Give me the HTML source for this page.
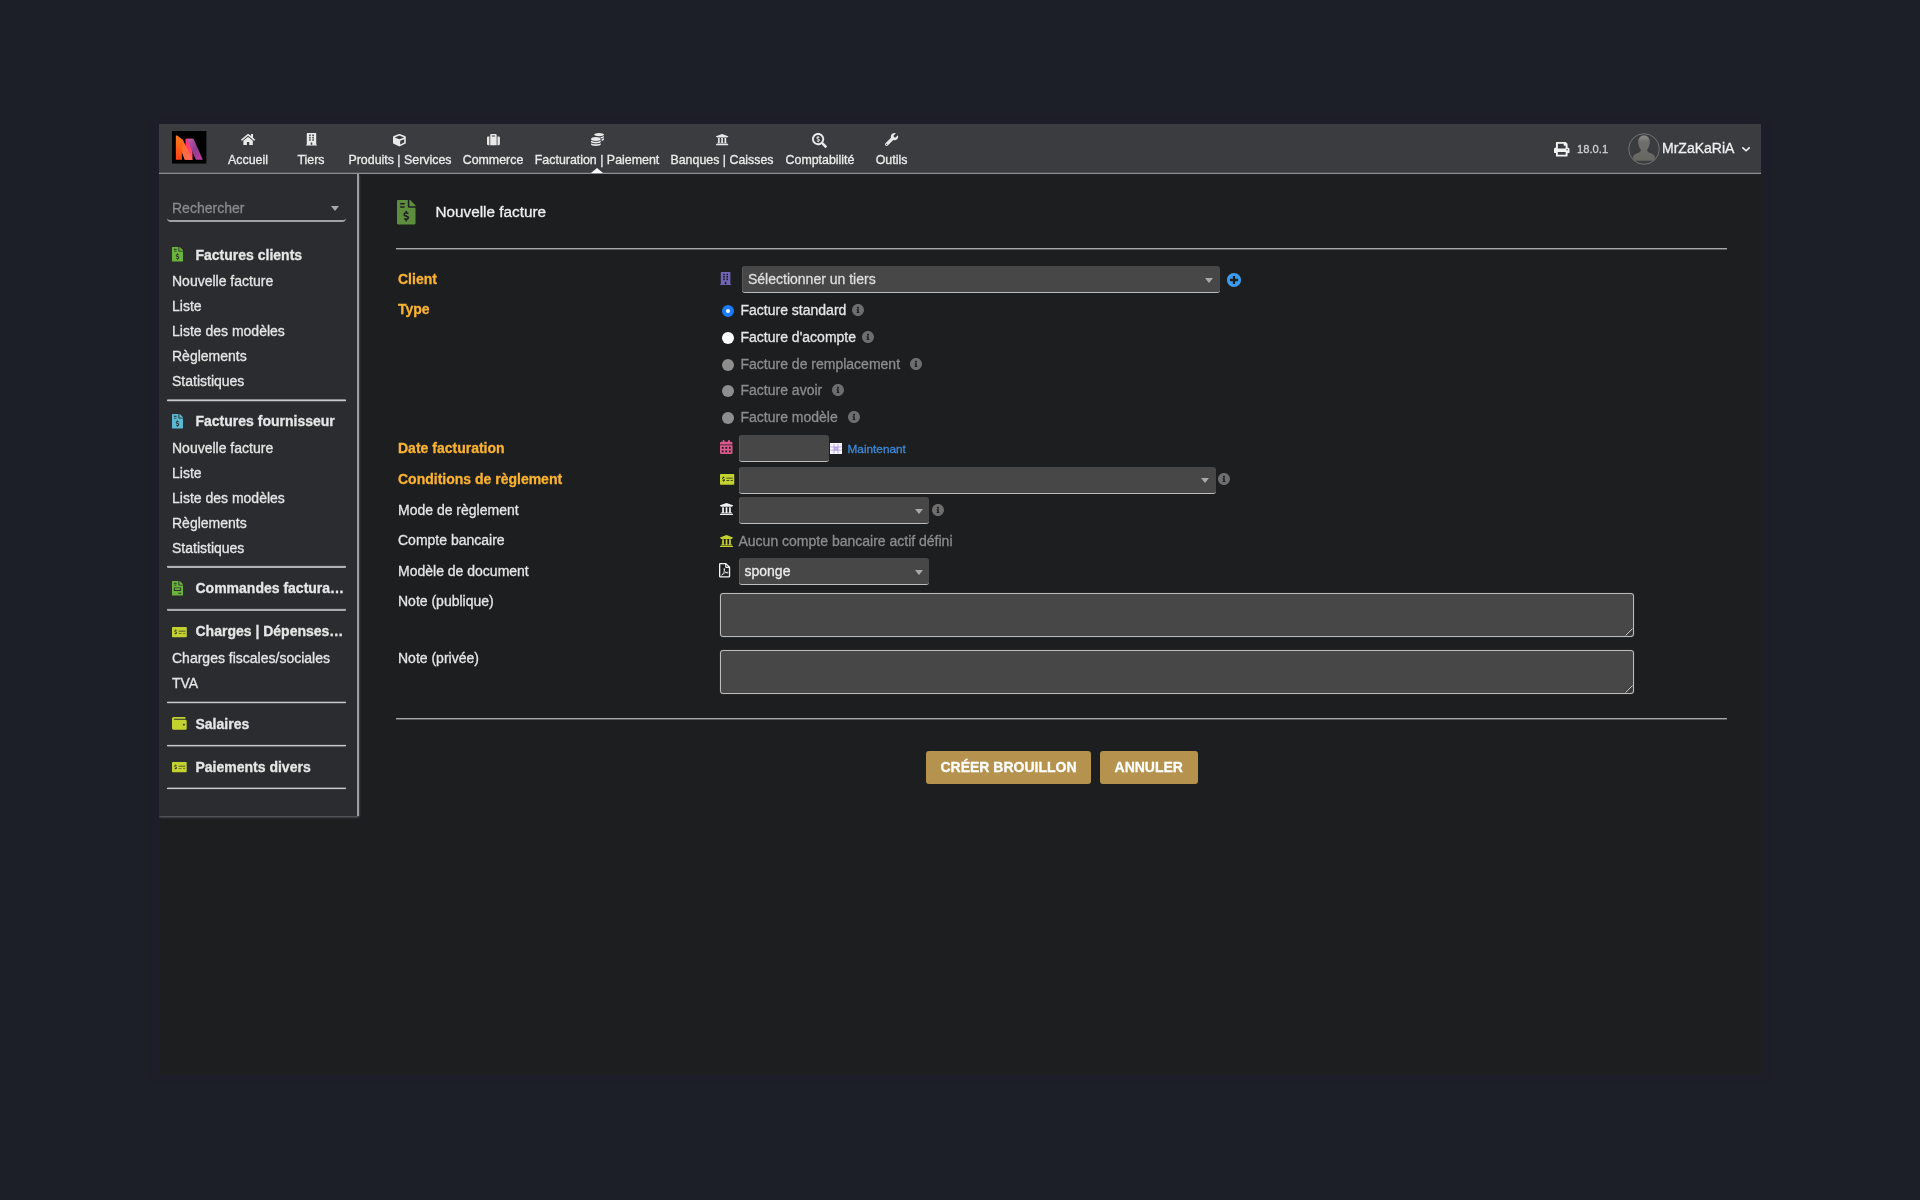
<!DOCTYPE html>
<html lang="fr">
<head>
<meta charset="utf-8">
<title>Nouvelle facture</title>
<style>
*{box-sizing:border-box;margin:0;padding:0}
html,body{width:1920px;height:1200px;overflow:hidden}
body{background:#1d1f28;font-family:"Liberation Sans",sans-serif;font-size:14px;color:#e6e6e6;position:relative}
.abs,.t,.ic,.sep,.fld,.ta,.radio,.info,.btn{position:absolute}
#win{left:159px;top:124px;width:1602px;height:951px;background:#1d1e20;box-shadow:0 0 5px 3px rgba(31,29,46,.6)}
#topbar{left:159px;top:124px;width:1602px;height:50px;background:#3b3c40;border-bottom:1px solid #8d8e91;box-shadow:inset 0 -1px 0 #505155}
#side{left:159px;top:174px;width:200px;height:642px;background:#2b2c30;border-right:2px solid #9e9ea1;box-shadow:0 1px 2.5px rgba(190,190,195,.5);clip-path:inset(0 -5px -10px 0)}
.t{white-space:nowrap;line-height:16px;font-size:14px;color:#e6e6e6;-webkit-text-stroke:0.3px currentColor}
.nav{font-size:12.4px;text-align:center;width:160px;margin-left:-80px;color:#ececec}
.b{font-weight:bold}
.req{font-weight:bold;color:#f9b233}
.dim{color:#8d8d8d}
.sep{left:166.5px;width:179.5px;height:3px;border-radius:1px;background:linear-gradient(to bottom,rgba(200,200,205,var(--a)) 0 1px,rgba(200,200,205,var(--b)) 1px 2px,rgba(200,200,205,var(--c)) 2px 3px)}
.hr{position:absolute;left:396px;width:1331px;height:2px;background:linear-gradient(to bottom,#a8a8ab 0 1px,rgba(168,168,171,.42) 1px 2px)}
.fld{background:#474747;border-bottom:1.5px solid #bdbdbd;border-radius:3px 3px 3px 3px;box-shadow:inset 1px 0 0 rgba(120,120,120,.35)}
.arrow{position:absolute;width:0;height:0;border-left:4px solid transparent;border-right:4px solid transparent;border-top:5px solid #a9a9a9}
.ta{left:720px;width:914px;height:44px;background:#474747;border:1px solid #bcbcbc;border-radius:3px;box-shadow:0 0 1px rgba(200,200,200,.55)}
.radio{width:12px;height:12px;border-radius:50%}
.info{width:12px;height:12px}
.btn{height:33px;background:#b5934f;border-radius:3px;color:#fff;font-weight:bold;font-size:14px;line-height:33px;text-align:center;white-space:nowrap;-webkit-text-stroke:0.3px #fff}
svg{position:absolute;overflow:visible}
</style>
</head>
<body>
<div id="root" style="position:absolute;left:0;top:0;width:1920px;height:1200px;will-change:transform">
<div id="win" class="abs"></div>
<div id="topbar" class="abs"></div>
<div id="side" class="abs"></div>

<!-- ===== TOP BAR ===== -->

<div class="t nav" style="left:248px;top:152px">Accueil</div>
<div class="t nav" style="left:311px;top:152px">Tiers</div>
<div class="t nav" style="left:400px;top:152px">Produits | Services</div>
<div class="t nav" style="left:493px;top:152px">Commerce</div>
<div class="t nav" style="left:597px;top:152px">Facturation | Paiement</div>
<div class="t nav" style="left:722px;top:152px">Banques | Caisses</div>
<div class="t nav" style="left:820px;top:152px">Comptabilité</div>
<div class="t nav" style="left:891.5px;top:152px">Outils</div>
<div class="abs" style="left:591px;top:168px;width:0;height:0;border-left:6px solid transparent;border-right:6px solid transparent;border-bottom:5px solid #fff"></div>

<div class="t" style="left:1577px;top:141px;font-size:11.2px;color:#d0d0d0">18.0.1</div>
<div class="t" style="left:1662px;top:140px;color:#f0f0f0">MrZaKaRiA</div>

<!-- ===== SIDEBAR ===== -->
<div class="t" style="left:172px;top:200px;color:#8a8a8c">Rechercher</div>
<div class="arrow" style="left:331px;top:206px"></div>
<div class="abs" style="left:167px;top:210px;width:179px;height:12px;border-bottom:2px solid #a0a0a6;border-radius:0 0 4px 4px"></div>

<div class="t b" style="left:195.5px;top:247px">Factures clients</div>
<div class="t" style="left:172px;top:273px">Nouvelle facture</div>
<div class="t" style="left:172px;top:298px">Liste</div>
<div class="t" style="left:172px;top:323px">Liste des modèles</div>
<div class="t" style="left:172px;top:348px">Règlements</div>
<div class="t" style="left:172px;top:373px">Statistiques</div>
<div class="sep" style="top:399px;--a:0.6;--b:1;--c:0.25"></div>

<div class="t b" style="left:195.5px;top:413px">Factures fournisseur</div>
<div class="t" style="left:172px;top:440px">Nouvelle facture</div>
<div class="t" style="left:172px;top:465px">Liste</div>
<div class="t" style="left:172px;top:490px">Liste des modèles</div>
<div class="t" style="left:172px;top:515px">Règlements</div>
<div class="t" style="left:172px;top:540px">Statistiques</div>
<div class="sep" style="top:565px;--a:0.12;--b:0.85;--c:0.85"></div>

<div class="t b" style="left:195.5px;top:580px">Commandes factura…</div>
<div class="sep" style="top:608px;--a:0.12;--b:0.8;--c:0.8"></div>

<div class="t b" style="left:195.5px;top:623px">Charges | Dépenses…</div>
<div class="t" style="left:172px;top:650px">Charges fiscales/sociales</div>
<div class="t" style="left:172px;top:675px">TVA</div>
<div class="sep" style="top:701px;--a:0.3;--b:1;--c:0.2"></div>

<div class="t b" style="left:195.5px;top:716px">Salaires</div>
<div class="sep" style="top:744px;--a:0.12;--b:1;--c:0.4"></div>

<div class="t b" style="left:195.5px;top:759px">Paiements divers</div>
<div class="sep" style="top:787px;--a:0.4;--b:1;--c:0.12"></div>

<!-- ===== MAIN ===== -->
<div class="t" style="left:435.5px;top:203px;font-size:15.3px;line-height:18px;color:#f0f0f0">Nouvelle facture</div>
<div class="hr" style="top:248px"></div>

<div class="t req" style="left:398px;top:271px">Client</div>
<div class="t req" style="left:398px;top:301px">Type</div>
<div class="t req" style="left:398px;top:440px">Date facturation</div>
<div class="t req" style="left:398px;top:471px">Conditions de règlement</div>
<div class="t" style="left:398px;top:502px">Mode de règlement</div>
<div class="t" style="left:398px;top:532px">Compte bancaire</div>
<div class="t" style="left:398px;top:563px">Modèle de document</div>
<div class="t" style="left:398px;top:593px">Note (publique)</div>
<div class="t" style="left:398px;top:650px">Note (privée)</div>

<!-- client select -->
<div class="fld" style="left:742px;top:266px;width:478px;height:27px"></div>
<div class="t" style="left:748px;top:271px;color:#dedede">Sélectionner un tiers</div>
<div class="arrow" style="left:1205px;top:278px"></div>

<!-- radios -->
<div class="radio" style="left:722px;top:305px;background:#fff;border:4px solid #1a7df7"></div>
<div class="t" style="left:740.5px;top:302px">Facture standard</div>
<div class="radio" style="left:722px;top:332px;background:#fff"></div>
<div class="t" style="left:740.5px;top:329px">Facture d'acompte</div>
<div class="radio" style="left:722px;top:358.5px;background:#8e8e8e"></div>
<div class="t dim" style="left:740.5px;top:355.5px">Facture de remplacement</div>
<div class="radio" style="left:722px;top:385px;background:#8e8e8e"></div>
<div class="t dim" style="left:740.5px;top:382px">Facture avoir</div>
<div class="radio" style="left:722px;top:412px;background:#8e8e8e"></div>
<div class="t dim" style="left:740.5px;top:409px">Facture modèle</div>

<!-- date -->
<div class="fld" style="left:739px;top:435px;width:90px;height:27px"></div>
<div class="t" style="left:847.5px;top:441px;font-size:11.8px;color:#3d8bd8">Maintenant</div>

<!-- conditions -->
<div class="fld" style="left:739px;top:466.5px;width:477px;height:27px"></div>
<div class="arrow" style="left:1201px;top:478px"></div>

<!-- mode -->
<div class="fld" style="left:739px;top:497px;width:190px;height:27px"></div>
<div class="arrow" style="left:915px;top:508.5px"></div>

<!-- compte -->
<div class="t dim" style="left:738.5px;top:533px">Aucun compte bancaire actif défini</div>

<!-- modele -->
<div class="fld" style="left:739px;top:558px;width:190px;height:27px"></div>
<div class="t" style="left:744.5px;top:563px;color:#ececec">sponge</div>
<div class="arrow" style="left:915px;top:569.5px"></div>

<!-- textareas -->
<div class="ta" style="top:593px"></div>
<div class="ta" style="top:650px"></div>

<div class="hr" style="top:718px"></div>

<div class="btn" style="left:926px;top:751px;width:165px">CRÉER BROUILLON</div>
<div class="btn" style="left:1100px;top:751px;width:97.5px">ANNULER</div>

<svg style="left:241.00px;top:134.00px" width="14.20" height="11.10" viewBox="-0.0 32.0 576.0 448.0" preserveAspectRatio="none"><path fill="#e9e9e9" d="M280.37 148.26L96 300.11V464a16 16 0 0 0 16 16l112.06-.29a16 16 0 0 0 15.92-16V368a16 16 0 0 1 16-16h64a16 16 0 0 1 16 16v95.64a16 16 0 0 0 16 16.05L464 480a16 16 0 0 0 16-16V300L295.67 148.26a12.19 12.19 0 0 0-15.3 0zM571.6 251.47L488 182.56V44.05a12 12 0 0 0-12-12h-56a12 12 0 0 0-12 12v72.61L318.47 43a48 48 0 0 0-61 0L4.34 251.47a12 12 0 0 0-1.6 16.9l25.5 31A12 12 0 0 0 45.15 301l235.22-193.74a12.19 12.19 0 0 1 15.3 0L530.9 301a12 12 0 0 0 16.9-1.6l25.5-31a12 12 0 0 0-1.7-16.93z"/></svg>
<svg style="left:305.60px;top:133.30px" width="11.00" height="12.60" viewBox="0.0 0.0 448.0 512.0" preserveAspectRatio="none"><path fill="#e9e9e9" d="M436 480h-20V24c0-13.255-10.745-24-24-24H56C42.745 0 32 10.745 32 24v456H12c-6.627 0-12 5.373-12 12v20h448v-20c0-6.627-5.373-12-12-12zM128 76c0-6.627 5.373-12 12-12h40c6.627 0 12 5.373 12 12v40c0 6.627-5.373 12-12 12h-40c-6.627 0-12-5.373-12-12V76zm0 96c0-6.627 5.373-12 12-12h40c6.627 0 12 5.373 12 12v40c0 6.627-5.373 12-12 12h-40c-6.627 0-12-5.373-12-12v-40zm52 148h-40c-6.627 0-12-5.373-12-12v-40c0-6.627 5.373-12 12-12h40c6.627 0 12 5.373 12 12v40c0 6.627-5.373 12-12 12zm76 160h-64v-84c0-6.627 5.373-12 12-12h40c6.627 0 12 5.373 12 12v84zm64-172c0 6.627-5.373 12-12 12h-40c-6.627 0-12-5.373-12-12v-40c0-6.627 5.373-12 12-12h40c6.627 0 12 5.373 12 12v40zm0-96c0 6.627-5.373 12-12 12h-40c-6.627 0-12-5.373-12-12v-40c0-6.627 5.373-12 12-12h40c6.627 0 12 5.373 12 12v40zm0-96c0 6.627-5.373 12-12 12h-40c-6.627 0-12-5.373-12-12V76c0-6.627 5.373-12 12-12h40c6.627 0 12 5.373 12 12v40z"/></svg>
<svg style="left:393.20px;top:133.50px" width="12.80" height="12.50" viewBox="0.0 3.2 511.9 503.2" preserveAspectRatio="none"><path fill="#e9e9e9" d="M239.1 6.3l-208 78c-18.700 7-31.100 25-31.100 45v225.100c0 18.200 10.300 34.800 26.500 42.900l208 104c13.500 6.800 29.400 6.800 42.900 0l208-104c16.300-8.100 26.500-24.800 26.500-42.900V129.300c0-20-12.400-37.900-31.100-44.900l-208-78C262 2.200 250 2.200 239.100 6.300zM256 68.400l192 72v1.100l-192 78-192-78v-1.100l192-72zm32 356V275.500l160-65v133.900l-160 80z"/></svg>
<svg style="left:486.50px;top:134.00px" width="12.90" height="11.30" viewBox="0.0 32.0 512.0 448.0" preserveAspectRatio="none"><path fill="#e9e9e9" d="M128 480h256V80c0-26.500-21.500-48-48-48H176c-26.500 0-48 21.500-48 48v400zm64-384h128v32H192V96zm320 80v256c0 26.500-21.500 48-48 48h-48V128h48c26.500 0 48 21.500 48 48zM96 480H48c-26.500 0-48-21.500-48-48V176c0-26.500 21.500-48 48-48h48v352z"/></svg>
<svg style="left:590.60px;top:133.00px" width="13.00" height="12.90" viewBox="0.0 0.0 512.0 512.0" preserveAspectRatio="none"><path fill="#e9e9e9" d="M0 405.3V448c0 35.300 86 64 192 64s192-28.700 192-64v-42.700C342.700 434.400 267.200 448 192 448S41.300 434.400 0 405.300zM320 128c106 0 192-28.700 192-64S426 0 320 0 128 28.700 128 64s86 64 192 64zM0 300.400V352c0 35.300 86 64 192 64s192-28.700 192-64v-51.600c-41.300 34-116.900 51.600-192 51.600S41.300 334.400 0 300.400zm416 11c57.300-11.100 96-31.700 96-55.400v-42.700c-23.200 16.400-57.300 27.600-96 34.500v63.600zM192 160C86 160 0 195.800 0 240s86 80 192 80 192-35.800 192-80-86-80-192-80zm219.300 56.300c60-10.800 100.700-32 100.700-56.300v-42.700c-35.500 25.100-96.500 38.600-160.700 41.800 29.500 14.300 51.200 33.500 60 57.200z"/></svg>
<svg style="left:716.20px;top:134.40px" width="12.20" height="11.20" viewBox="16.0 32.0 480.0 448.0" preserveAspectRatio="none"><path fill="#e9e9e9" d="M496 128v16a8 8 0 0 1-8 8h-24v12c0 6.627-5.373 12-12 12H60c-6.627 0-12-5.373-12-12v-12H24a8 8 0 0 1-8-8v-16a8 8 0 0 1 4.941-7.392l232-88a7.996 7.996 0 0 1 6.118 0l232 88A8 8 0 0 1 496 128zm-24 304H40c-13.255 0-24 10.745-24 24v16a8 8 0 0 0 8 8h464a8 8 0 0 0 8-8v-16c0-13.255-10.745-24-24-24zM96 192v192H60c-6.627 0-12 5.373-12 12v20h416v-20c0-6.627-5.373-12-12-12h-36V192h-64v192h-64V192h-64v192h-64V192H96z"/></svg>
<svg style="left:812.00px;top:133.00px" width="15.00" height="15.00" viewBox="0.0 0.0 512.0 512.0" preserveAspectRatio="none"><path fill="#e9e9e9" d="M505.040 442.660l-99.710-99.690c-4.500-4.500-10.600-7-17-7h-16.300c27.600-35.300 44-79.690 44-127.990C416.030 93.090 322.920 0 208.020 0S0 93.090 0 207.980s93.110 207.980 208.020 207.980c48.300 0 92.710-16.400 128.010-44v16.300c0 6.400 2.500 12.500 7 17l99.710 99.690c9.400 9.400 24.600 9.400 33.900 0l28.300-28.300c9.400-9.400 9.400-24.590.100-33.990zm-297.020-90.700c-79.540 0-144-64.340-144-143.980 0-79.530 64.350-143.980 144-143.980 79.540 0 144 64.340 144 143.980 0 79.530-64.350 143.980-144 143.980zm27.110-152.540l-45.010-13.500c-5.160-1.550-8.770-6.780-8.770-12.730 0-7.270 5.300-13.190 11.800-13.190h28.110c4.560 0 8.960 1.290 12.820 3.720 3.240 2.030 7.360 1.910 10.130-.730l11.750-11.210c3.530-3.370 3.330-9.210-.570-12.140-9.100-6.830-20.080-10.770-31.370-11.350V112c0-4.420-3.580-8-8-8h-16c-4.420 0-8 3.580-8 8v16.120c-23.630.630-42.680 20.550-42.680 45.070 0 19.970 12.990 37.810 31.580 43.390l45.010 13.500c5.160 1.550 8.770 6.780 8.770 12.730 0 7.270-5.300 13.190-11.800 13.190h-28.100c-4.560 0-8.960-1.290-12.820-3.720-3.240-2.030-7.360-1.910-10.130.730l-11.750 11.210c-3.530 3.370-3.330 9.210.570 12.140 9.100 6.830 20.080 10.770 31.370 11.350V304c0 4.420 3.580 8 8 8h16c4.420 0 8-3.580 8-8v-16.120c23.630-.630 42.680-20.540 42.680-45.070 0-19.970-12.990-37.810-31.590-43.390z"/></svg>
<svg style="left:885.00px;top:133.20px" width="13.20" height="12.90" viewBox="-0.0 0.0 512.0 512.0" preserveAspectRatio="none"><path fill="#e9e9e9" d="M507.73 109.1c-2.240-9.030-13.540-12.090-20.120-5.510l-74.360 74.360-67.880-11.310-11.310-67.880 74.360-74.360c6.620-6.620 3.430-17.900-5.660-20.160-47.380-11.740-99.550.910-136.580 37.930-39.640 39.640-50.550 97.100-34.050 147.200L18.740 402.760c-24.990 24.990-24.990 65.510 0 90.500 24.990 24.990 65.510 24.990 90.500 0l213.210-213.210c50.120 16.710 107.470 5.680 147.370-34.220 37.070-37.070 49.700-89.320 37.910-136.730zM64 472c-13.250 0-24-10.750-24-24 0-13.260 10.750-24 24-24s24 10.740 24 24c0 13.250-10.750 24-24 24z"/></svg>
<svg style="left:1553.80px;top:141.80px" width="15.50" height="14.60" viewBox="0.0 0.0 512.0 512.0" preserveAspectRatio="none"><path fill="#f2f2f2" d="M448 192V77.250c0-8.490-3.370-16.620-9.370-22.630L393.370 9.370c-6-6-14.140-9.370-22.630-9.370H96C78.330 0 64 14.330 64 32v160c-35.350 0-64 28.650-64 64v112c0 8.840 7.160 16 16 16h48v96c0 17.670 14.330 32 32 32h320c17.670 0 32-14.330 32-32v-96h48c8.840 0 16-7.160 16-16V256c0-35.350-28.650-64-64-64zm-64 256H128v-96h256v96zm0-224H128V64h192v48c0 8.840 7.160 16 16 16h48v96zm48 72c-13.250 0-24-10.750-24-24 0-13.260 10.750-24 24-24s24 10.740 24 24c0 13.250-10.750 24-24 24z"/></svg>
<svg style="left:1741.80px;top:147.20px" width="8.10" height="4.70" viewBox="5.7 123.5 436.7 265.0" preserveAspectRatio="none"><path fill="#f2f2f2" d="M207.029 381.476L12.686 187.132c-9.373-9.373-9.373-24.569 0-33.941l22.667-22.667c9.357-9.357 24.522-9.375 33.901-.04L224 284.505l154.745-154.021c9.379-9.335 24.544-9.317 33.901.04l22.667 22.667c9.373 9.373 9.373 24.569 0 33.941L240.971 381.476c-9.373 9.372-24.569 9.372-33.942 0z"/></svg>
<svg style="left:172.00px;top:247.00px" width="11.00" height="14.60" viewBox="0.0 0.0 384.0 512.0" preserveAspectRatio="none"><path fill="#6ab43c" d="M377 105L279.100 7c-4.500-4.500-10.600-7-17-7H256v128h128v-6.100c0-6.300-2.500-12.400-7-16.900zM224 136V0H24C10.700 0 0 10.700 0 24v464c0 13.300 10.700 24 24 24h336c13.300 0 24-10.700 24-24V160H248c-13.200 0-24-10.800-24-24zM64 72c0-4.420 3.580-8 8-8h80c4.420 0 8 3.580 8 8v16c0 4.420-3.580 8-8 8H72c-4.420 0-8-3.580-8-8V72zm0 80v-16c0-4.420 3.580-8 8-8h80c4.420 0 8 3.580 8 8v16c0 4.420-3.580 8-8 8H72c-4.420 0-8-3.580-8-8zm144 263.880V440c0 4.420-3.580 8-8 8h-16c-4.420 0-8-3.580-8-8v-24.290c-11.290-.58-22.270-4.520-31.370-11.350-3.900-2.930-4.100-8.770-.57-12.140l11.750-11.210c2.770-2.640 6.890-2.760 10.130-.73 3.870 2.420 8.260 3.720 12.820 3.720h28.110c6.500 0 11.800-5.920 11.800-13.190 0-5.950-3.610-11.190-8.770-12.730l-45-13.500c-18.590-5.580-31.580-23.420-31.580-43.390 0-24.520 19.050-44.440 42.670-45.070V232c0-4.420 3.580-8 8-8h16c4.420 0 8 3.580 8 8v24.290c11.290.58 22.270 4.510 31.370 11.350 3.900 2.930 4.100 8.770.57 12.140l-11.750 11.210c-2.770 2.640-6.890 2.760-10.130.73-3.870-2.430-8.260-3.720-12.820-3.720h-28.110c-6.500 0-11.800 5.920-11.800 13.190 0 5.950 3.610 11.190 8.770 12.730l45 13.500c18.590 5.580 31.580 23.420 31.580 43.390 0 24.530-19.050 44.440-42.670 45.070z"/></svg>
<svg style="left:172.00px;top:414.00px" width="11.00" height="14.60" viewBox="0.0 0.0 384.0 512.0" preserveAspectRatio="none"><path fill="#5ab8d0" d="M377 105L279.100 7c-4.500-4.500-10.600-7-17-7H256v128h128v-6.100c0-6.300-2.500-12.400-7-16.900zM224 136V0H24C10.700 0 0 10.700 0 24v464c0 13.300 10.700 24 24 24h336c13.300 0 24-10.700 24-24V160H248c-13.200 0-24-10.800-24-24zM64 72c0-4.420 3.580-8 8-8h80c4.420 0 8 3.580 8 8v16c0 4.420-3.580 8-8 8H72c-4.420 0-8-3.580-8-8V72zm0 80v-16c0-4.420 3.580-8 8-8h80c4.420 0 8 3.580 8 8v16c0 4.420-3.580 8-8 8H72c-4.420 0-8-3.580-8-8zm144 263.880V440c0 4.420-3.580 8-8 8h-16c-4.420 0-8-3.580-8-8v-24.290c-11.290-.58-22.270-4.520-31.370-11.350-3.900-2.930-4.100-8.770-.57-12.140l11.750-11.210c2.770-2.640 6.890-2.760 10.130-.73 3.870 2.420 8.260 3.720 12.820 3.720h28.110c6.500 0 11.800-5.920 11.800-13.190 0-5.950-3.610-11.190-8.770-12.730l-45-13.500c-18.590-5.580-31.580-23.420-31.580-43.390 0-24.520 19.050-44.440 42.670-45.070V232c0-4.420 3.580-8 8-8h16c4.420 0 8 3.580 8 8v24.290c11.290.58 22.270 4.510 31.370 11.350 3.900 2.930 4.100 8.770.57 12.140l-11.750 11.210c-2.770 2.640-6.890 2.760-10.130.73-3.870-2.430-8.260-3.720-12.820-3.720h-28.110c-6.500 0-11.800 5.920-11.800 13.190 0 5.950 3.610 11.190 8.770 12.730l45 13.500c18.590 5.580 31.580 23.420 31.580 43.390 0 24.530-19.050 44.440-42.670 45.070z"/></svg>
<svg style="left:172.00px;top:581.00px" width="11.00" height="14.60" viewBox="0.0 0.0 384.0 512.0" preserveAspectRatio="none"><path fill="#6ab43c" d="M288 256H96v64h192v-64zm89-151L279.100 7c-4.500-4.500-10.600-7-17-7H256v128h128v-6.100c0-6.300-2.500-12.400-7-16.900zm-153 31V0H24C10.700 0 0 10.700 0 24v464c0 13.300 10.700 24 24 24h336c13.300 0 24-10.700 24-24V160H248c-13.200 0-24-10.800-24-24zM64 72c0-4.420 3.580-8 8-8h80c4.420 0 8 3.580 8 8v16c0 4.420-3.580 8-8 8H72c-4.420 0-8-3.580-8-8V72zm0 64c0-4.420 3.580-8 8-8h80c4.420 0 8 3.580 8 8v16c0 4.420-3.580 8-8 8H72c-4.420 0-8-3.580-8-8v-16zm256 304c0 4.420-3.580 8-8 8h-80c-4.420 0-8-3.580-8-8v-16c0-4.420 3.580-8 8-8h80c4.420 0 8 3.580 8 8v16zm0-200v96c0 8.840-7.160 16-16 16H80c-8.840 0-16-7.160-16-16v-96c0-8.840 7.160-16 16-16h224c8.840 0 16 7.160 16 16z"/></svg>
<svg style="left:172.00px;top:627.00px" width="14.80" height="10.30" viewBox="0.0 32.0 640.0 448.0" preserveAspectRatio="none"><path fill="#c3d22f" d="M608 32H32C14.330 32 0 46.330 0 64v384c0 17.670 14.330 32 32 32h576c17.670 0 32-14.330 32-32V64c0-17.670-14.330-32-32-32zM176 327.880V344c0 4.420-3.580 8-8 8h-16c-4.420 0-8-3.580-8-8v-16.290c-11.290-.58-22.270-4.520-31.370-11.350-3.900-2.930-4.100-8.770-.57-12.140l11.750-11.210c2.770-2.640 6.890-2.760 10.130-.73 3.870 2.420 8.260 3.720 12.820 3.720h28.110c6.500 0 11.800-5.920 11.800-13.190 0-5.950-3.610-11.190-8.770-12.730l-45-13.500c-18.590-5.580-31.580-23.420-31.580-43.390 0-24.520 19.050-44.440 42.670-45.070V152c0-4.420 3.580-8 8-8h16c4.420 0 8 3.580 8 8v16.290c11.290.58 22.270 4.510 31.370 11.350 3.900 2.930 4.100 8.770.57 12.140l-11.750 11.210c-2.770 2.640-6.890 2.760-10.130.73-3.870-2.430-8.260-3.720-12.820-3.720h-28.110c-6.500 0-11.800 5.920-11.800 13.190 0 5.950 3.610 11.190 8.770 12.730l45 13.500c18.590 5.580 31.580 23.420 31.580 43.390 0 24.530-19.040 44.440-42.670 45.070zM416 312c0 4.420-3.580 8-8 8H296c-4.420 0-8-3.580-8-8v-16c0-4.420 3.580-8 8-8h112c4.420 0 8 3.580 8 8v16zm160 0c0 4.420-3.580 8-8 8h-80c-4.420 0-8-3.580-8-8v-16c0-4.420 3.580-8 8-8h80c4.420 0 8 3.580 8 8v16zm0-96c0 4.420-3.580 8-8 8H296c-4.420 0-8-3.580-8-8v-16c0-4.420 3.580-8 8-8h272c4.420 0 8 3.580 8 8v16z"/></svg>
<svg style="left:172.00px;top:717.00px" width="14.70" height="12.80" viewBox="0.0 32.0 512.0 448.0" preserveAspectRatio="none"><path fill="#c3d22f" d="M461.2 128H80c-8.840 0-16-7.160-16-16s7.160-16 16-16h384c8.840 0 16-7.160 16-16 0-26.510-21.490-48-48-48H64C28.650 32 0 60.650 0 96v320c0 35.350 28.650 64 64 64h397.200c28.020 0 50.800-21.530 50.800-48V176c0-26.470-22.780-48-50.800-48zM416 336c-17.670 0-32-14.330-32-32s14.330-32 32-32 32 14.330 32 32-14.330 32-32 32z"/></svg>
<svg style="left:172.00px;top:762.00px" width="14.70" height="10.30" viewBox="0.0 32.0 640.0 448.0" preserveAspectRatio="none"><path fill="#c3d22f" d="M608 32H32C14.330 32 0 46.330 0 64v384c0 17.670 14.330 32 32 32h576c17.670 0 32-14.330 32-32V64c0-17.670-14.330-32-32-32zM176 327.880V344c0 4.420-3.580 8-8 8h-16c-4.420 0-8-3.580-8-8v-16.290c-11.290-.58-22.270-4.520-31.370-11.350-3.900-2.930-4.100-8.770-.57-12.140l11.750-11.210c2.770-2.640 6.890-2.760 10.130-.73 3.870 2.420 8.260 3.720 12.820 3.720h28.110c6.500 0 11.800-5.920 11.800-13.190 0-5.950-3.610-11.190-8.770-12.730l-45-13.500c-18.590-5.580-31.580-23.420-31.580-43.390 0-24.520 19.050-44.440 42.670-45.070V152c0-4.420 3.580-8 8-8h16c4.420 0 8 3.580 8 8v16.290c11.290.58 22.270 4.510 31.370 11.350 3.900 2.930 4.100 8.770.57 12.140l-11.750 11.210c-2.770 2.640-6.890 2.760-10.130.73-3.870-2.430-8.260-3.720-12.820-3.720h-28.110c-6.500 0-11.800 5.920-11.800 13.190 0 5.950 3.610 11.190 8.770 12.730l45 13.500c18.590 5.580 31.580 23.420 31.580 43.390 0 24.530-19.040 44.440-42.670 45.070zM416 312c0 4.420-3.580 8-8 8H296c-4.420 0-8-3.580-8-8v-16c0-4.420 3.580-8 8-8h112c4.420 0 8 3.580 8 8v16zm160 0c0 4.420-3.580 8-8 8h-80c-4.420 0-8-3.580-8-8v-16c0-4.420 3.580-8 8-8h80c4.420 0 8 3.580 8 8v16zm0-96c0 4.420-3.580 8-8 8H296c-4.420 0-8-3.580-8-8v-16c0-4.420 3.580-8 8-8h272c4.420 0 8 3.580 8 8v16z"/></svg>
<svg style="left:397.00px;top:200.00px" width="18.50" height="24.50" viewBox="0.0 0.0 384.0 512.0" preserveAspectRatio="none"><path fill="#5d8e3d" d="M377 105L279.100 7c-4.500-4.500-10.600-7-17-7H256v128h128v-6.100c0-6.300-2.500-12.400-7-16.900zM224 136V0H24C10.700 0 0 10.700 0 24v464c0 13.300 10.700 24 24 24h336c13.300 0 24-10.700 24-24V160H248c-13.200 0-24-10.800-24-24zM64 72c0-4.420 3.580-8 8-8h80c4.420 0 8 3.580 8 8v16c0 4.420-3.580 8-8 8H72c-4.420 0-8-3.580-8-8V72zm0 80v-16c0-4.420 3.580-8 8-8h80c4.420 0 8 3.580 8 8v16c0 4.420-3.580 8-8 8H72c-4.420 0-8-3.580-8-8zm144 263.880V440c0 4.420-3.580 8-8 8h-16c-4.420 0-8-3.580-8-8v-24.290c-11.290-.58-22.270-4.520-31.370-11.350-3.900-2.930-4.100-8.770-.57-12.140l11.750-11.210c2.770-2.640 6.890-2.760 10.130-.73 3.870 2.420 8.260 3.720 12.820 3.720h28.110c6.500 0 11.800-5.920 11.800-13.190 0-5.950-3.610-11.190-8.770-12.730l-45-13.500c-18.590-5.580-31.580-23.420-31.580-43.390 0-24.520 19.050-44.440 42.670-45.070V232c0-4.420 3.580-8 8-8h16c4.420 0 8 3.580 8 8v24.290c11.290.58 22.270 4.510 31.370 11.350 3.900 2.930 4.100 8.770.57 12.140l-11.750 11.210c-2.770 2.640-6.890 2.760-10.130.73-3.870-2.430-8.260-3.720-12.820-3.720h-28.110c-6.500 0-11.800 5.920-11.800 13.190 0 5.950 3.610 11.190 8.770 12.730l45 13.500c18.590 5.580 31.580 23.420 31.580 43.390 0 24.530-19.050 44.440-42.670 45.070z"/></svg>
<svg style="left:720.00px;top:271.50px" width="11.20" height="13.00" viewBox="0.0 0.0 448.0 512.0" preserveAspectRatio="none"><path fill="#6f66b8" d="M436 480h-20V24c0-13.255-10.745-24-24-24H56C42.745 0 32 10.745 32 24v456H12c-6.627 0-12 5.373-12 12v20h448v-20c0-6.627-5.373-12-12-12zM128 76c0-6.627 5.373-12 12-12h40c6.627 0 12 5.373 12 12v40c0 6.627-5.373 12-12 12h-40c-6.627 0-12-5.373-12-12V76zm0 96c0-6.627 5.373-12 12-12h40c6.627 0 12 5.373 12 12v40c0 6.627-5.373 12-12 12h-40c-6.627 0-12-5.373-12-12v-40zm52 148h-40c-6.627 0-12-5.373-12-12v-40c0-6.627 5.373-12 12-12h40c6.627 0 12 5.373 12 12v40c0 6.627-5.373 12-12 12zm76 160h-64v-84c0-6.627 5.373-12 12-12h40c6.627 0 12 5.373 12 12v84zm64-172c0 6.627-5.373 12-12 12h-40c-6.627 0-12-5.373-12-12v-40c0-6.627 5.373-12 12-12h40c6.627 0 12 5.373 12 12v40zm0-96c0 6.627-5.373 12-12 12h-40c-6.627 0-12-5.373-12-12v-40c0-6.627 5.373-12 12-12h40c6.627 0 12 5.373 12 12v40zm0-96c0 6.627-5.373 12-12 12h-40c-6.627 0-12-5.373-12-12V76c0-6.627 5.373-12 12-12h40c6.627 0 12 5.373 12 12v40z"/></svg>
<svg style="left:719.75px;top:440.00px" width="12.50" height="14.00" viewBox="0.0 0.0 448.0 512.0" preserveAspectRatio="none"><path fill="#d9578a" d="M0 464c0 26.500 21.500 48 48 48h352c26.500 0 48-21.500 48-48V192H0v272zm320-196c0-6.600 5.400-12 12-12h40c6.600 0 12 5.400 12 12v40c0 6.600-5.400 12-12 12h-40c-6.600 0-12-5.400-12-12v-40zm0 128c0-6.600 5.400-12 12-12h40c6.600 0 12 5.400 12 12v40c0 6.600-5.400 12-12 12h-40c-6.600 0-12-5.400-12-12v-40zM192 268c0-6.600 5.400-12 12-12h40c6.600 0 12 5.400 12 12v40c0 6.600-5.400 12-12 12h-40c-6.600 0-12-5.400-12-12v-40zm0 128c0-6.600 5.400-12 12-12h40c6.600 0 12 5.400 12 12v40c0 6.600-5.400 12-12 12h-40c-6.600 0-12-5.400-12-12v-40zM64 268c0-6.600 5.400-12 12-12h40c6.600 0 12 5.400 12 12v40c0 6.600-5.400 12-12 12H76c-6.600 0-12-5.400-12-12v-40zm0 128c0-6.600 5.400-12 12-12h40c6.600 0 12 5.400 12 12v40c0 6.600-5.400 12-12 12H76c-6.600 0-12-5.400-12-12v-40zM400 64h-48V16c0-8.800-7.200-16-16-16h-32c-8.800 0-16 7.200-16 16v48H160V16c0-8.800-7.200-16-16-16h-32c-8.800 0-16 7.200-16 16v48H48C21.500 64 0 85.500 0 112v48h448v-48c0-26.500-21.500-48-48-48z"/></svg>
<svg style="left:719.75px;top:474.30px" width="14.25" height="10.70" viewBox="0.0 32.0 640.0 448.0" preserveAspectRatio="none"><path fill="#c3d22f" d="M608 32H32C14.330 32 0 46.330 0 64v384c0 17.670 14.330 32 32 32h576c17.670 0 32-14.330 32-32V64c0-17.670-14.330-32-32-32zM176 327.880V344c0 4.420-3.580 8-8 8h-16c-4.420 0-8-3.580-8-8v-16.290c-11.290-.58-22.270-4.520-31.370-11.350-3.900-2.930-4.100-8.770-.57-12.140l11.750-11.210c2.770-2.640 6.890-2.760 10.130-.73 3.870 2.420 8.260 3.720 12.820 3.720h28.110c6.500 0 11.800-5.920 11.800-13.190 0-5.950-3.610-11.190-8.770-12.730l-45-13.500c-18.590-5.580-31.580-23.420-31.580-43.390 0-24.520 19.050-44.440 42.670-45.070V152c0-4.420 3.580-8 8-8h16c4.420 0 8 3.580 8 8v16.290c11.290.58 22.270 4.510 31.370 11.350 3.900 2.930 4.100 8.770.57 12.140l-11.750 11.210c-2.770 2.640-6.890 2.760-10.130.73-3.870-2.430-8.260-3.720-12.820-3.720h-28.110c-6.500 0-11.800 5.920-11.800 13.190 0 5.950 3.610 11.190 8.770 12.730l45 13.500c18.590 5.580 31.580 23.420 31.580 43.390 0 24.530-19.040 44.440-42.670 45.070zM416 312c0 4.420-3.580 8-8 8H296c-4.420 0-8-3.580-8-8v-16c0-4.420 3.580-8 8-8h112c4.420 0 8 3.580 8 8v16zm160 0c0 4.420-3.580 8-8 8h-80c-4.420 0-8-3.580-8-8v-16c0-4.420 3.580-8 8-8h80c4.420 0 8 3.580 8 8v16zm0-96c0 4.420-3.580 8-8 8H296c-4.420 0-8-3.580-8-8v-16c0-4.420 3.580-8 8-8h272c4.420 0 8 3.580 8 8v16z"/></svg>
<svg style="left:720.00px;top:502.75px" width="13.00" height="12.00" viewBox="16.0 32.0 480.0 448.0" preserveAspectRatio="none"><path fill="#f2f2f2" d="M496 128v16a8 8 0 0 1-8 8h-24v12c0 6.627-5.373 12-12 12H60c-6.627 0-12-5.373-12-12v-12H24a8 8 0 0 1-8-8v-16a8 8 0 0 1 4.941-7.392l232-88a7.996 7.996 0 0 1 6.118 0l232 88A8 8 0 0 1 496 128zm-24 304H40c-13.255 0-24 10.745-24 24v16a8 8 0 0 0 8 8h464a8 8 0 0 0 8-8v-16c0-13.255-10.745-24-24-24zM96 192v192H60c-6.627 0-12 5.373-12 12v20h416v-20c0-6.627-5.373-12-12-12h-36V192h-64v192h-64V192h-64v192h-64V192H96z"/></svg>
<svg style="left:720.00px;top:534.80px" width="13.00" height="12.10" viewBox="16.0 32.0 480.0 448.0" preserveAspectRatio="none"><path fill="#c3d22f" d="M496 128v16a8 8 0 0 1-8 8h-24v12c0 6.627-5.373 12-12 12H60c-6.627 0-12-5.373-12-12v-12H24a8 8 0 0 1-8-8v-16a8 8 0 0 1 4.941-7.392l232-88a7.996 7.996 0 0 1 6.118 0l232 88A8 8 0 0 1 496 128zm-24 304H40c-13.255 0-24 10.745-24 24v16a8 8 0 0 0 8 8h464a8 8 0 0 0 8-8v-16c0-13.255-10.745-24-24-24zM96 192v192H60c-6.627 0-12 5.373-12 12v20h416v-20c0-6.627-5.373-12-12-12h-36V192h-64v192h-64V192h-64v192h-64V192H96z"/></svg>
<svg style="left:1226.75px;top:273.00px" width="14.00" height="14.00" viewBox="8.0 8.0 496.0 496.0" preserveAspectRatio="none"><path fill="#3c9cf0" d="M256 8C119 8 8 119 8 256s111 248 248 248 248-111 248-248S393 8 256 8zm144 276c0 6.6-5.400 12-12 12h-92v92c0 6.600-5.400 12-12 12h-56c-6.600 0-12-5.400-12-12v-92h-92c-6.600 0-12-5.400-12-12v-56c0-6.600 5.400-12 12-12h92v-92c0-6.600 5.400-12 12-12h56c6.600 0 12 5.400 12 12v92h92c6.600 0 12 5.400 12 12v56z"/></svg>
<svg style="left:852.40px;top:304.40px" width="12.00" height="12.00" viewBox="8.0 8.0 496.0 496.0" preserveAspectRatio="none"><path fill="#6e6e6e" d="M256 8C119.043 8 8 119.083 8 256c0 136.997 111.043 248 248 248s248-111.003 248-248C504 119.083 392.957 8 256 8zm0 110c23.196 0 42 18.804 42 42s-18.804 42-42 42-42-18.804-42-42 18.804-42 42-42zm56 254c0 6.627-5.373 12-12 12h-88c-6.627 0-12-5.373-12-12v-24c0-6.627 5.373-12 12-12h12v-64h-12c-6.627 0-12-5.373-12-12v-24c0-6.627 5.373-12 12-12h64c6.627 0 12 5.373 12 12v100h12c6.627 0 12 5.373 12 12v24z"/></svg>
<svg style="left:862.00px;top:331.00px" width="12.00" height="12.00" viewBox="8.0 8.0 496.0 496.0" preserveAspectRatio="none"><path fill="#6e6e6e" d="M256 8C119.043 8 8 119.083 8 256c0 136.997 111.043 248 248 248s248-111.003 248-248C504 119.083 392.957 8 256 8zm0 110c23.196 0 42 18.804 42 42s-18.804 42-42 42-42-18.804-42-42 18.804-42 42-42zm56 254c0 6.627-5.373 12-12 12h-88c-6.627 0-12-5.373-12-12v-24c0-6.627 5.373-12 12-12h12v-64h-12c-6.627 0-12-5.373-12-12v-24c0-6.627 5.373-12 12-12h64c6.627 0 12 5.373 12 12v100h12c6.627 0 12 5.373 12 12v24z"/></svg>
<svg style="left:910.00px;top:357.75px" width="12.00" height="12.00" viewBox="8.0 8.0 496.0 496.0" preserveAspectRatio="none"><path fill="#6e6e6e" d="M256 8C119.043 8 8 119.083 8 256c0 136.997 111.043 248 248 248s248-111.003 248-248C504 119.083 392.957 8 256 8zm0 110c23.196 0 42 18.804 42 42s-18.804 42-42 42-42-18.804-42-42 18.804-42 42-42zm56 254c0 6.627-5.373 12-12 12h-88c-6.627 0-12-5.373-12-12v-24c0-6.627 5.373-12 12-12h12v-64h-12c-6.627 0-12-5.373-12-12v-24c0-6.627 5.373-12 12-12h64c6.627 0 12 5.373 12 12v100h12c6.627 0 12 5.373 12 12v24z"/></svg>
<svg style="left:832.00px;top:384.30px" width="12.00" height="12.00" viewBox="8.0 8.0 496.0 496.0" preserveAspectRatio="none"><path fill="#6e6e6e" d="M256 8C119.043 8 8 119.083 8 256c0 136.997 111.043 248 248 248s248-111.003 248-248C504 119.083 392.957 8 256 8zm0 110c23.196 0 42 18.804 42 42s-18.804 42-42 42-42-18.804-42-42 18.804-42 42-42zm56 254c0 6.627-5.373 12-12 12h-88c-6.627 0-12-5.373-12-12v-24c0-6.627 5.373-12 12-12h12v-64h-12c-6.627 0-12-5.373-12-12v-24c0-6.627 5.373-12 12-12h64c6.627 0 12 5.373 12 12v100h12c6.627 0 12 5.373 12 12v24z"/></svg>
<svg style="left:847.75px;top:411.00px" width="12.00" height="12.00" viewBox="8.0 8.0 496.0 496.0" preserveAspectRatio="none"><path fill="#6e6e6e" d="M256 8C119.043 8 8 119.083 8 256c0 136.997 111.043 248 248 248s248-111.003 248-248C504 119.083 392.957 8 256 8zm0 110c23.196 0 42 18.804 42 42s-18.804 42-42 42-42-18.804-42-42 18.804-42 42-42zm56 254c0 6.627-5.373 12-12 12h-88c-6.627 0-12-5.373-12-12v-24c0-6.627 5.373-12 12-12h12v-64h-12c-6.627 0-12-5.373-12-12v-24c0-6.627 5.373-12 12-12h64c6.627 0 12 5.373 12 12v100h12c6.627 0 12 5.373 12 12v24z"/></svg>
<svg style="left:1218.30px;top:473.00px" width="12.00" height="12.00" viewBox="8.0 8.0 496.0 496.0" preserveAspectRatio="none"><path fill="#6e6e6e" d="M256 8C119.043 8 8 119.083 8 256c0 136.997 111.043 248 248 248s248-111.003 248-248C504 119.083 392.957 8 256 8zm0 110c23.196 0 42 18.804 42 42s-18.804 42-42 42-42-18.804-42-42 18.804-42 42-42zm56 254c0 6.627-5.373 12-12 12h-88c-6.627 0-12-5.373-12-12v-24c0-6.627 5.373-12 12-12h12v-64h-12c-6.627 0-12-5.373-12-12v-24c0-6.627 5.373-12 12-12h64c6.627 0 12 5.373 12 12v100h12c6.627 0 12 5.373 12 12v24z"/></svg>
<svg style="left:932.00px;top:503.75px" width="12.00" height="12.00" viewBox="8.0 8.0 496.0 496.0" preserveAspectRatio="none"><path fill="#6e6e6e" d="M256 8C119.043 8 8 119.083 8 256c0 136.997 111.043 248 248 248s248-111.003 248-248C504 119.083 392.957 8 256 8zm0 110c23.196 0 42 18.804 42 42s-18.804 42-42 42-42-18.804-42-42 18.804-42 42-42zm56 254c0 6.627-5.373 12-12 12h-88c-6.627 0-12-5.373-12-12v-24c0-6.627 5.373-12 12-12h12v-64h-12c-6.627 0-12-5.373-12-12v-24c0-6.627 5.373-12 12-12h64c6.627 0 12 5.373 12 12v100h12c6.627 0 12 5.373 12 12v24z"/></svg>
<svg style="left:719.2px;top:562.6px" width="11.2" height="14.6" viewBox="0 0 384 512" preserveAspectRatio="none">
<path fill="none" stroke="#f2f2f2" stroke-width="46" stroke-linejoin="round" d="M48 23H232L361 152V464A25 25 0 0 1 336 489H48A25 25 0 0 1 23 464V48A25 25 0 0 1 48 23Z"/>
<path fill="none" stroke="#f2f2f2" stroke-width="40" d="M232 23V128A24 24 0 0 0 256 152H361"/>
<path fill="none" stroke="#f2f2f2" stroke-width="26" stroke-linejoin="round" stroke-linecap="round" d="M104 420C150 380 190 300 192 210C192 180 168 180 168 210C172 280 230 350 290 352C320 352 320 322 290 324C220 328 150 370 104 420Z"/>
</svg>
<svg style="left:830px;top:443px" width="12" height="11" viewBox="0 0 12 11">
<rect x="0" y="0" width="12" height="11" fill="#f6f4fc"/>
<path d="M4 1V10.5M8 1V10.5M0.5 4H11.5M0.5 7.2H11.5" stroke="#9a84d8" stroke-width="0.8" fill="none" opacity=".75"/>
<rect x="4" y="4" width="4" height="3.2" fill="#8a6fd0" opacity=".45"/>
</svg>
<svg style="left:171.5px;top:131.1px" width="34.4" height="32.6" viewBox="0 0 34.4 32.6">
<defs>
<linearGradient id="lg1" x1="0" y1="0" x2="0" y2="1"><stop offset="0" stop-color="#ff7d1c"/><stop offset="1" stop-color="#ff4212"/></linearGradient>
<linearGradient id="lg2" x1="0" y1="0" x2="1" y2="1"><stop offset="0" stop-color="#ff6a1a"/><stop offset="1" stop-color="#ff6c66"/></linearGradient>
<linearGradient id="lg3" x1="0" y1="0" x2="0" y2="1"><stop offset="0" stop-color="#ff2a78"/><stop offset="1" stop-color="#ff5a6a"/></linearGradient>
<linearGradient id="lg4" x1="0" y1="0" x2="1" y2="1"><stop offset="0" stop-color="#c45cb0"/><stop offset=".5" stop-color="#8c3d8e"/><stop offset="1" stop-color="#c83ca4"/></linearGradient>
</defs>
<rect width="34.4" height="32.6" fill="#000"/>
<rect x="13.5" y="7.7" width="7" height="21.05" fill="url(#lg3)"/>
<polygon points="3.85,4.6 5.2,4.6 10.4,8.4 20.5,28.75 12.8,28.75 9.9,21 9.9,28.75 3.85,28.75" fill="url(#lg1)"/>
<polygon points="9.9,8.2 10.4,8.4 13.5,14.3 20.5,28.75 12.8,28.75 9.9,21" fill="url(#lg2)"/>
<polygon points="15,7.7 21.6,7.7 30.8,28.75 23.8,28.75" fill="url(#lg4)"/>
</svg>
<svg style="left:1628px;top:133.2px" width="32" height="32" viewBox="0 0 32 32">
<defs><clipPath id="avc"><circle cx="16" cy="16" r="15"/></clipPath>
<linearGradient id="avg" x1="0" y1="0" x2="0" y2="1"><stop offset="0" stop-color="#8d8d8a"/><stop offset=".25" stop-color="#6f706c"/><stop offset="1" stop-color="#666762"/></linearGradient></defs>
<g clip-path="url(#avc)">
<path fill="url(#avg)" d="M16 2.6c-3.4 0-5.8 2.600-5.800 6.200 0 2.800.8 5.200 2.200 7.300.6.900.5 2-.2 2.700-.9.900-2.600 1.400-4.400 2.100-1.600.6-2.600 1.700-2.600 3.200v3.600h21.600v-3.600c0-1.500-1-2.600-2.600-3.200-1.800-.7-3.500-1.200-4.400-2.100-.7-.7-.8-1.800-.2-2.700 1.400-2.100 2.200-4.500 2.200-7.300 0-3.600-2.400-6.200-5.800-6.200z"/>
</g>
<circle cx="16" cy="16" r="15.3" fill="none" stroke="#727377" stroke-width="1"/>
</svg>
<svg style="left:1624px;top:627px" width="9" height="9" viewBox="0 0 9 9"><path d="M1.5 8.5L8.5 1.5" stroke="#c4c4c4" stroke-width="1" fill="none"/><path d="M4.6 8.6L8.6 4.6" stroke="#2a2a2a" stroke-width="1.2" fill="none"/><path d="M0.6 8.2L8.2 0.6" stroke="#333" stroke-width=".8" fill="none" opacity=".7"/></svg>
<svg style="left:1624px;top:684px" width="9" height="9" viewBox="0 0 9 9"><path d="M1.5 8.5L8.5 1.5" stroke="#c4c4c4" stroke-width="1" fill="none"/><path d="M4.6 8.6L8.6 4.6" stroke="#2a2a2a" stroke-width="1.2" fill="none"/><path d="M0.6 8.2L8.2 0.6" stroke="#333" stroke-width=".8" fill="none" opacity=".7"/></svg>

</div>
</body>
</html>
